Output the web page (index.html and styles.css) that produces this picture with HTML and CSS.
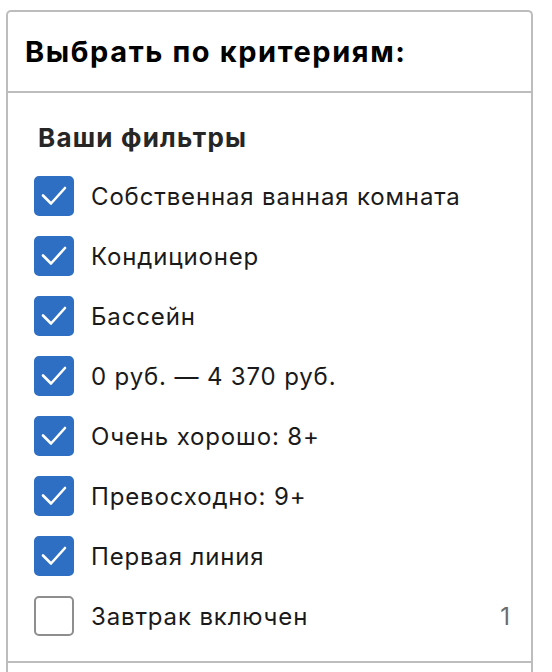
FILE: index.html
```html
<!DOCTYPE html>
<html lang="ru">
<head>
    <meta charset="UTF-8">
    <meta name="viewport" content="width=device-width, initial-scale=1.0">
    <title>Фильтры</title>
    <link rel="stylesheet" href="styles.css">
</head>
<body>
    <div class="panel">
        <div class="panel-header">
            <h2>Выбрать по критериям:</h2>
        </div>

        <div class="panel-body">
            <h3>Ваши фильтры</h3>
            <div class="filter-list">
                <label class="filter-item">
                    <span class="check checked"><svg viewBox="0 0 40 40"><path d="M9 19.5 L17 27.5 L31 12"/></svg></span>
                    <span class="name">Собственная ванная комната</span>
                </label>
                <label class="filter-item">
                    <span class="check checked"><svg viewBox="0 0 40 40"><path d="M9 19.5 L17 27.5 L31 12"/></svg></span>
                    <span class="name">Кондиционер</span>
                </label>
                <label class="filter-item">
                    <span class="check checked"><svg viewBox="0 0 40 40"><path d="M9 19.5 L17 27.5 L31 12"/></svg></span>
                    <span class="name">Бассейн</span>
                </label>
                <label class="filter-item">
                    <span class="check checked"><svg viewBox="0 0 40 40"><path d="M9 19.5 L17 27.5 L31 12"/></svg></span>
                    <span class="name">0 руб. — 4 370 руб.</span>
                </label>
                <label class="filter-item">
                    <span class="check checked"><svg viewBox="0 0 40 40"><path d="M9 19.5 L17 27.5 L31 12"/></svg></span>
                    <span class="name">Очень хорошо: 8+</span>
                </label>
                <label class="filter-item">
                    <span class="check checked"><svg viewBox="0 0 40 40"><path d="M9 19.5 L17 27.5 L31 12"/></svg></span>
                    <span class="name">Превосходно: 9+</span>
                </label>
                <label class="filter-item">
                    <span class="check checked"><svg viewBox="0 0 40 40"><path d="M9 19.5 L17 27.5 L31 12"/></svg></span>
                    <span class="name">Первая линия</span>
                </label>
                <label class="filter-item">
                    <span class="check"></span>
                    <span class="name">Завтрак включен</span>
                    <span class="count">1</span>
                </label>
            </div>
        </div>

        <div class="panel-section"></div>
    </div>
</body>
</html>
```

FILE: styles.css
```css
body {
    font-family: Inter, "Noto Sans", sans-serif;
    background: #ffffff;
    color: #1a1a1a;
    margin: 0;
    padding: 10px 19px 0 6px;
}

.panel {
    border: 2px solid #bdbdbd;
    border-bottom: none;
    border-radius: 5px 5px 0 0;
}

.panel-header {
    height: 79px;
    display: flex;
    align-items: center;
    padding: 0 17px;
    border-bottom: 2px solid #bdbdbd;
}

.panel-header h2 {
    margin: 0;
    font-size: 29px;
    letter-spacing: 1.6px;
    font-weight: 700;
    color: #000000;
}

.panel-body {
    padding: 30px 21px 15px 26px;
    border-bottom: 2px solid #bdbdbd;
}

.panel-body h3 {
    margin: 0 0 13px 4px;
    font-size: 26px;
    letter-spacing: 1.2px;
    line-height: 30px;
    font-weight: 700;
    color: #262626;
}

.filter-item {
    display: flex;
    align-items: center;
    height: 60px;
    cursor: pointer;
}

.check {
    width: 40px;
    height: 40px;
    box-sizing: border-box;
    border: 2px solid #8e8e8e;
    border-radius: 5px;
    flex-shrink: 0;
}

.check.checked {
    background: #2f6fc3;
    border-color: #2f6fc3;
}

.check svg {
    display: block;
    width: 40px;
    height: 40px;
    margin: -2px;
    fill: none;
    stroke: #ffffff;
    stroke-width: 2.6;
    stroke-linecap: round;
    stroke-linejoin: round;
}

.filter-item .name {
    flex: 1;
    margin-left: 17px;
    font-size: 24px;
    letter-spacing: 0.85px;
    color: #1a1a1a;
}

.filter-item .count {
    font-size: 24px;
    color: #6b6b6b;
}

.panel-section {
    height: 10px;
}
```
